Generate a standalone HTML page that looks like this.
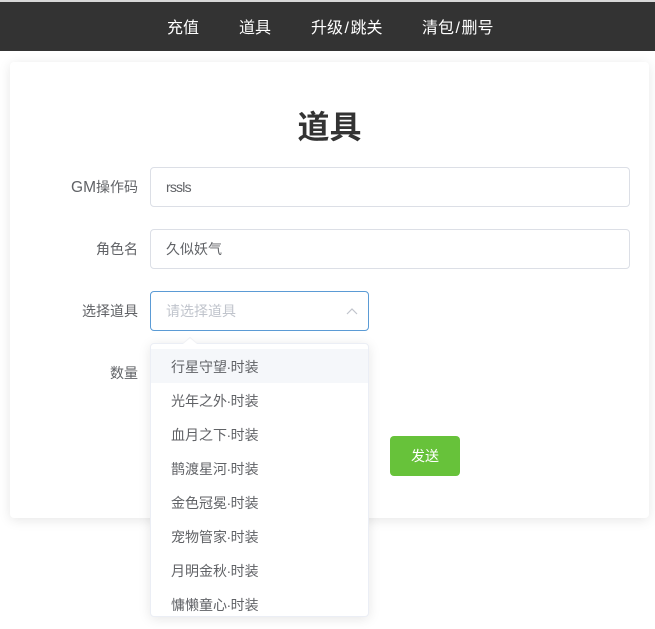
<!DOCTYPE html>
<html lang="zh">
<head>
<meta charset="utf-8">
<style>
html,body{margin:0;padding:0;background:#fff;width:655px;height:629px;overflow:hidden}
body{position:relative;font-family:"Liberation Sans","Noto Sans CJK SC",sans-serif;font-size:14px;color:#606266}
div{box-sizing:border-box}
.abs{position:absolute}
.top{left:0;top:0;width:655px;height:2px;background:#d8d8d8}
.nav{left:0;top:2px;width:655px;height:49px;background:#333}
.nav span{position:absolute;top:2px;line-height:49px;font-size:16px;color:#fff;white-space:nowrap}
.nav span i{font-style:normal;margin:0 1.5px}
.card{left:10px;top:62px;width:639px;height:456px;background:#fff;box-shadow:0 2px 12px rgba(0,0,0,.1);border-radius:4px}
h1{position:absolute;left:0;top:104px;width:659px;margin:0;text-align:center;font-size:32px;line-height:46px;font-weight:700;color:#333}
.label{position:absolute;left:10px;width:128px;text-align:right;line-height:40px;color:#606266;white-space:nowrap}
.input{position:absolute;left:150px;height:40px;border:1px solid #dcdfe6;border-radius:4px;background:#fff;padding-left:15px;line-height:38px;color:#606266}
.sel{border-color:#5b9bd5;color:#c0c4cc}
.sel svg{position:absolute;right:10px;top:15px}
.drop{left:150px;top:343px;width:219px;height:274px;background:#fff;border:1px solid #ebeef5;border-radius:4px;box-shadow:0 2px 12px rgba(0,0,0,.1);overflow:hidden;padding-top:5px}
.item{height:34px;line-height:36px;padding-left:20px;color:#606266;white-space:nowrap}
.item i{font-style:normal;margin:0 -.5px}
.item.h{background:#f5f7fa}
.tip{left:183px;top:337px}
.btn{left:390px;top:436px;width:70px;height:40px;background:#67c23a;border-radius:4px;color:#fff;text-align:center;line-height:40px}
</style>
</head>
<body>
<div class="abs top"></div>
<div class="abs nav">
<span style="left:167px">充值</span>
<span style="left:239px">道具</span>
<span style="left:311px">升级<i>/</i>跳关</span>
<span style="left:422px">清包<i>/</i>删号</span>
</div>
<div class="abs card"></div>
<h1>道具</h1>
<div class="label" style="top:167px"><span style="font-size:15.5px">GM</span>操作码</div>
<div class="input" style="top:167px;width:480px"><span style="letter-spacing:-.8px">rssls</span></div>
<div class="label" style="top:229px">角色名</div>
<div class="input" style="top:229px;width:480px">久似妖气</div>
<div class="label" style="top:291px">选择道具</div>
<div class="input sel" style="top:291px;width:219px">请选择道具
<svg width="12" height="8" viewBox="0 0 12 8"><path d="M1 7L6 2L11 7" fill="none" stroke="#c0c4cc" stroke-width="1.2"/></svg>
</div>
<div class="label" style="top:353px">数量</div>
<div class="abs btn">发送</div>
<div class="abs drop">
<div class="item h">行星守望<i>·</i>时装</div>
<div class="item">光年之外<i>·</i>时装</div>
<div class="item">血月之下<i>·</i>时装</div>
<div class="item">鹊渡星河<i>·</i>时装</div>
<div class="item">金色冠冕<i>·</i>时装</div>
<div class="item">宠物管家<i>·</i>时装</div>
<div class="item">月明金秋<i>·</i>时装</div>
<div class="item">慵懒童心<i>·</i>时装</div>
</div>
<svg class="abs tip" width="14" height="7" viewBox="0 0 14 7"><path d="M0 7L7 0L14 7Z" fill="#fff"/><path d="M0 6.5L7 .5L14 6.5" fill="none" stroke="#f0f1f4" stroke-width="1"/></svg>
</body>
</html>
